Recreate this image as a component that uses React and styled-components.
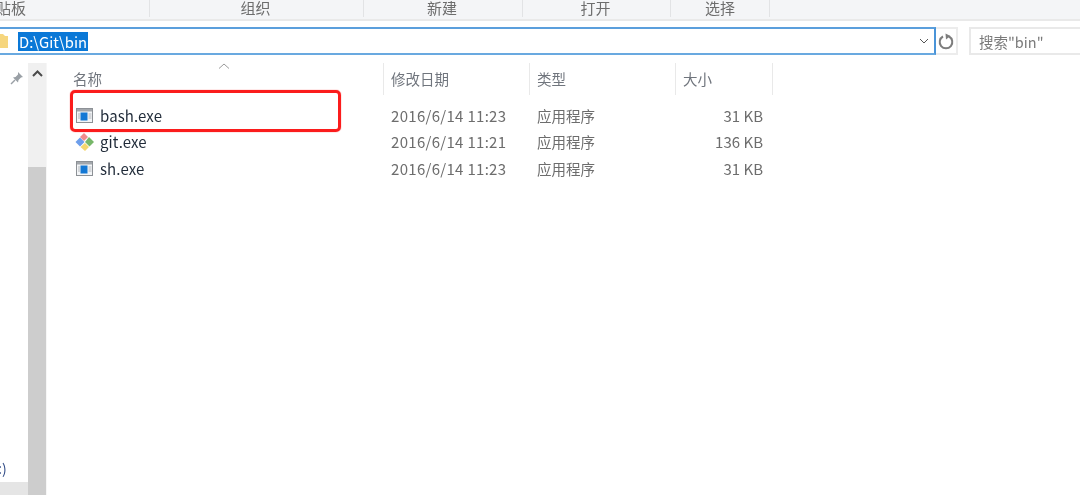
import styled, { createGlobalStyle } from 'styled-components';

const GlobalStyle = createGlobalStyle`
   html, body {
      margin: 0;
      background: #fff;
      overflow: hidden;
   }
   * {
      box-sizing: border-box;
   }
`;

const Window = styled.div`
   position: relative;
   width: 1080px;
   height: 495px;
   overflow: hidden;
   background: #fff;
   font-family: "Noto Sans CJK SC", "Open Sans", sans-serif;
   font-size: 14.5px;
   color: #6d6d6d;
   filter: blur(0.3px);
`;

const Ribbon = styled.div`
   display: flex;
   height: 21px;
   background: #f4f5f7;
   border-bottom: 2px solid #e9e9e9;
`;

const RibbonGroup = styled.div`
   width: ${(p) => p.$width}px;
   height: 17px;
   display: flex;
   align-items: flex-start;
   justify-content: ${(p) => p.$align || 'center'};
   border-right: 1px solid #e2e3e5;
   font-size: 15px;
   line-height: 15px;
   padding-right: ${(p) => p.$shift || 0}px;
`;

const ClippedLabel = styled.span`
   margin-left: -4px;
`;

const AddressRow = styled.div`
   display: flex;
   height: 28px;
   margin-top: 6px;
`;

const AddressBox = styled.div`
   width: 936px;
   display: flex;
   align-items: center;
   border: 2px solid #69a9e0;
   border-left: 0;
   border-top-color: #5b9fdc;
   border-right-color: #4a94d8;
`;

const FolderTab = styled.svg`
   width: 8px;
   height: 14px;
   margin-right: 10px;
   flex: none;
`;

const Selected = styled.span`
   background: #0a78d7;
   color: #fff;
   height: 19px;
   padding: 0 1px;
   font-size: 14.8px;
   line-height: 19px;
`;

const Dropdown = styled.svg`
   width: 10px;
   height: 6px;
   margin-left: auto;
   margin-right: 5px;
`;

const Refresh = styled.div`
   width: 22px;
   display: flex;
   align-items: center;
   justify-content: center;
   border: 2px solid #ececec;
   border-left: 0;
`;

const SearchBox = styled.div`
   flex: 1;
   margin-left: 11px;
   display: flex;
   align-items: center;
   padding-left: 8px;
   border: 2px solid #e9e9e9;
   border-right: 0;
   color: #7a7a7a;
`;

const Body = styled.div`
   display: flex;
   height: 432px;
   margin-top: 8px;
`;

const NavPane = styled.div`
   width: 28px;
   display: flex;
   flex-direction: column;
   align-items: flex-end;
   padding: 8px 4px 0 0;
`;

const PinIcon = styled.svg`
   width: 14px;
   height: 14px;
   flex: none;
`;

const NavLabel = styled.div`
   margin-top: auto;
   align-self: flex-start;
   height: 23px;
   font-size: 14px;
   line-height: 18px;
   color: #2f4a86;
   margin-left: -2px;
`;

const NavActive = styled.div`
   align-self: stretch;
   height: 13px;
   margin-right: -4px;
   background: #e5e5e5;
`;

const ScrollTrack = styled.div`
   width: 19px;
   display: flex;
   flex-direction: column;
   background: #f0f0f0;
   border-right: 1px solid #f6f6f6;
`;

const ScrollArrow = styled.div`
   height: 104px;
   display: flex;
   justify-content: center;
   padding-top: 7px;
`;

const ScrollThumb = styled.div`
   flex: 1;
   background: #cdcdcd;
`;

const ChevronUp = styled.svg`
   width: 11px;
   height: 7px;
`;

const ListPane = styled.div`
   flex: 1;
   position: relative;
`;

const HeaderRow = styled.div`
   display: grid;
   grid-template-columns: 337px 146px 146px 97px;
   height: 32px;
`;

const HeaderCell = styled.div`
   position: relative;
   display: flex;
   align-items: center;
   padding-left: ${(p) => p.$pad}px;
   padding-bottom: 2px;
   border-right: 1px solid #e9e9e9;
   color: #70757d;
`;

const SortCaret = styled.svg`
   position: absolute;
   left: 171px;
   top: 0;
   width: 12px;
   height: 6px;
`;

const FileList = styled.div`
   padding-top: 7px;
`;

const FileRow = styled.div`
   display: grid;
   grid-template-columns: 336px 146px 146px 97px;
   height: 26.5px;
   align-items: center;
`;

const NameCell = styled.div`
   display: flex;
   align-items: center;
   gap: 7px;
   padding-left: 29px;
   color: #1f2a38;
   font-size: 15px;
   letter-spacing: 0.1px;
`;

const IconSlot = styled.span`
   width: 17px;
   height: 20px;
   display: flex;
   align-items: center;
   justify-content: center;
`;

const DateCell = styled.div`
   padding-left: 8px;
   white-space: nowrap;
   font-size: 15px;
   letter-spacing: 0.3px;
`;

const TypeCell = styled.div`
   padding-left: 8px;
   white-space: nowrap;
`;

const SizeCell = styled.div`
   padding-right: 9px;
   text-align: right;
   font-size: 15px;
`;

const Highlight = styled.div`
   position: absolute;
   left: 23px;
   top: 27px;
   width: 271px;
   height: 42px;
   border: 3px solid #fb1c1c;
   border-radius: 5px;
   box-shadow: 0 0 1px #fb1c1c;
`;

const ExeIcon = () => (
   <svg width="17" height="15" viewBox="0 0 17 15">
      <rect x="0.5" y="0.5" width="16" height="14" fill="#f3f5f7" stroke="#8d9196" />
      <rect x="1" y="1" width="15" height="2.500" fill="#a3a7ac" />
      <rect x="4.500" y="4.500" width="7" height="8" fill="#1478d4" />
      <path d="M2 6h2M2 8h2M2 10h2M12.500 6h3M12.500 8h3M12.500 10h3" stroke="#b4b8bd" />
   </svg>
);

const GitIcon = () => (
   <svg width="20" height="20" viewBox="0 0 20 20" style={{ flex: 'none' }}>
      <path d="M9 1l4 4-4 4-4-4z" fill="#f08d8d" />
      <path d="M5 5.500l4.500 4.500L5 14.500.5 10z" fill="#6d9eeb" />
      <path d="M14 5l5 5-4.500 4.500L10 10z" fill="#77b769" />
      <path d="M10 11l4 4-4 4-4.500-4z" fill="#f5d76e" />
   </svg>
);

const files = [
   { name: 'bash.exe', date: '2016/6/14 11:23', size: '31 KB', icon: <ExeIcon /> },
   { name: 'git.exe', date: '2016/6/14 11:21', size: '136 KB', icon: <GitIcon /> },
   { name: 'sh.exe', date: '2016/6/14 11:23', size: '31 KB', icon: <ExeIcon /> },
];

const App = () => (
   <Window>
      <GlobalStyle />
      <Ribbon>
         <RibbonGroup $width={150} $align="flex-start">
            <ClippedLabel>贴板</ClippedLabel>
         </RibbonGroup>
         <RibbonGroup $width={214} $shift={2}>组织</RibbonGroup>
         <RibbonGroup $width={159} $shift={2}>新建</RibbonGroup>
         <RibbonGroup $width={148} $shift={2}>打开</RibbonGroup>
         <RibbonGroup $width={99}>选择</RibbonGroup>
      </Ribbon>
      <AddressRow>
         <AddressBox>
            <FolderTab viewBox="0 0 8 14">
               <path d="M0 0h3l2 2h3v12H0z" fill="#f6d67e" />
            </FolderTab>
            <Selected>D:\Git\bin</Selected>
            <Dropdown viewBox="0 0 10 6">
               <path d="M1 1l4 4 4-4" fill="none" stroke="#555" strokeWidth="1" />
            </Dropdown>
         </AddressBox>
         <Refresh>
            <svg width="16" height="17" viewBox="0 0 16 17">
               <path d="M11 3.500a6.300 6.300 0 1 1-6 0" fill="none" stroke="#7d7d7d" strokeWidth="2" />
               <path d="M7.500 .5l.5 6 4.500-3.500z" fill="#7d7d7d" />
            </svg>
         </Refresh>
         <SearchBox>搜索"bin"</SearchBox>
      </AddressRow>
      <Body>
         <NavPane>
            <PinIcon viewBox="0 0 14 14">
               <path d="M8 1l5 5-2 .5-2.500 2.500-.5 2.500-5-5 2.500-.5L8 3.500z" fill="#9aa0a6" />
               <path d="M5 9l-4 4" stroke="#9aa0a6" strokeWidth="1.500" />
            </PinIcon>
            <NavLabel>:)</NavLabel>
            <NavActive />
         </NavPane>
         <ScrollTrack>
            <ScrollArrow>
               <ChevronUp viewBox="0 0 11 7">
                  <path d="M1 6l4.500-4.500L10 6" fill="none" stroke="#4a4a4a" strokeWidth="2" />
               </ChevronUp>
            </ScrollArrow>
            <ScrollThumb />
         </ScrollTrack>
         <ListPane>
            <HeaderRow>
               <HeaderCell $pad={26}>
                  名称
                  <SortCaret viewBox="0 0 12 6">
                     <path d="M1 5.500L6 1l5 4.500" fill="none" stroke="#9a9a9a" />
                  </SortCaret>
               </HeaderCell>
               <HeaderCell $pad={7}>修改日期</HeaderCell>
               <HeaderCell $pad={7}>类型</HeaderCell>
               <HeaderCell $pad={7}>大小</HeaderCell>
            </HeaderRow>
            <FileList>
               {files.map((file) => (
                  <FileRow key={file.name}>
                     <NameCell>
                        <IconSlot>{file.icon}</IconSlot>
                        {file.name}
                     </NameCell>
                     <DateCell>{file.date}</DateCell>
                     <TypeCell>应用程序</TypeCell>
                     <SizeCell>{file.size}</SizeCell>
                  </FileRow>
               ))}
            </FileList>
            <Highlight />
         </ListPane>
      </Body>
   </Window>
);

export default App;
